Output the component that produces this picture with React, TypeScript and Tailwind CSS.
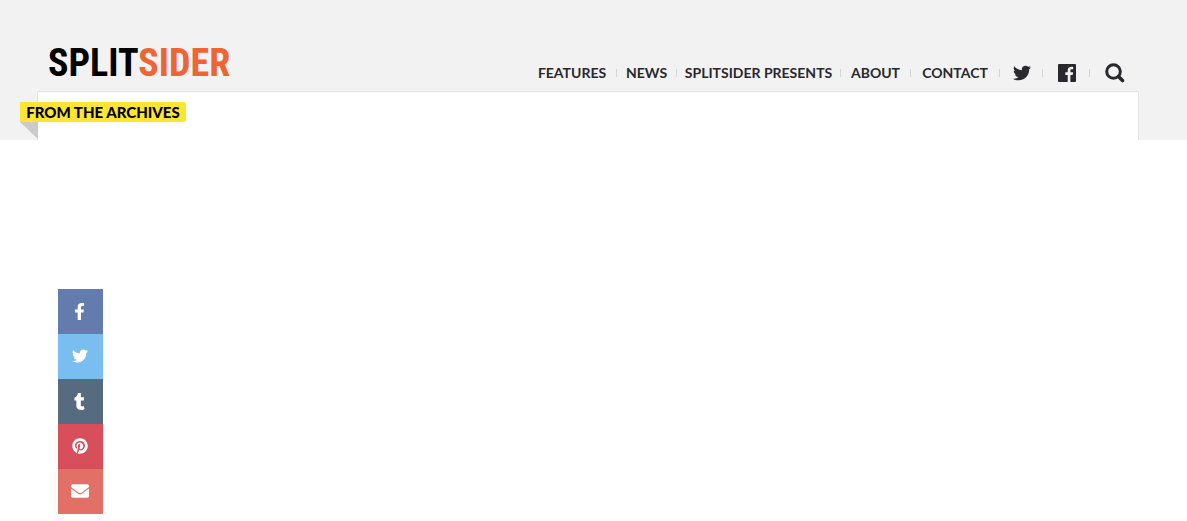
import { FaEnvelope, FaFacebookF, FaPinterest, FaTumblr, FaTwitter } from "react-icons/fa";

const links = [
  { label: "Features", width: "w-[89px]" },
  { label: "News", width: "w-[60px]" },
  { label: "Splitsider Presents", width: "w-[164px]" },
  { label: "About", width: "w-[70px]" },
  { label: "Contact", width: "w-[89px]" },
];

const shares = [
  { label: "Share on Facebook", color: "bg-[#637bad]", icon: <FaFacebookF size={17} /> },
  { label: "Share on Twitter", color: "bg-[#7abdf0]", icon: <FaTwitter size={16} /> },
  { label: "Share on Tumblr", color: "bg-[#566b80]", icon: <FaTumblr size={17} /> },
  { label: "Share on Pinterest", color: "bg-[#d64f5a]", icon: <FaPinterest size={16} /> },
  { label: "Share by email", color: "bg-[#e27066]", icon: <FaEnvelope size={18} /> },
];

const Divider = () => <span className="h-2 w-px shrink-0 bg-[#d4d4d4]" />;

const FacebookSquare = () => (
  <svg width="18" height="18" viewBox="0 0 18 18" fill="currentColor" aria-hidden="true">
    <path d="M1 0h16a1 1 0 0 1 1 1v16a1 1 0 0 1-1 1h-4.600v-7h2.300l.4-2.700h-2.700V6.600c0-.8.3-1.300 1.400-1.300h1.400V2.900c-.3 0-1.100-.1-2-.1-2.100 0-3.500 1.200-3.500 3.500v2H7.300V11h2.400v7H1a1 1 0 0 1-1-1V1a1 1 0 0 1 1-1z" />
  </svg>
);

const SearchIcon = () => (
  <svg width="20" height="20" viewBox="0 0 20 20" fill="none" stroke="currentColor" aria-hidden="true">
    <circle cx="8.500" cy="8.500" r="6.800" strokeWidth="3" />
    <path d="M13.500 13.500l4 4" strokeWidth="3.600" strokeLinecap="round" />
  </svg>
);

const Header = () => (
  <header className="bg-[#f2f2f2] pl-[37px] pr-12">
    <div className="flex h-[91px] items-end justify-between pl-[11px] pr-[14px]">
      <a
        href="#"
        className="mb-1 whitespace-nowrap font-['Roboto_Condensed','Liberation_Sans_Narrow','Liberation_Sans',sans-serif] text-[38px] font-bold leading-[48px] text-black"
      >
        SPLIT<span className="text-[#ee6435]">SIDER</span>
      </a>
      <nav className="mb-2 flex h-5 items-center font-['Lato',sans-serif] text-sm font-bold text-[#28282d]">
        {links.map((link) => (
          <div key={link.label} className={`flex shrink-0 items-center ${link.width}`}>
            <a href="#" className="flex-1 whitespace-nowrap text-center uppercase leading-5">
              {link.label}
            </a>
            <Divider />
          </div>
        ))}
        <a href="#" aria-label="Twitter" className="flex w-[42px] justify-center pl-0.5">
          <FaTwitter size={18} />
        </a>
        <Divider />
        <a href="#" aria-label="Facebook" className="flex w-[46px] justify-center pl-0.5">
          <FacebookSquare />
        </a>
        <Divider />
        <button type="button" aria-label="Search" className="ml-[15px]">
          <SearchIcon />
        </button>
      </nav>
    </div>
    <div className="relative h-[49px] rounded-t-xs border border-b-0 border-[#e2e2e2] bg-white">
      <div className="absolute -left-[18px] top-[10px]">
        <a
          href="#"
          className="block h-5 w-[166px] whitespace-nowrap rounded-r-xs bg-[#fee532] text-center font-['Lato',sans-serif] text-[15px] font-black leading-5 text-black"
        >
          FROM THE ARCHIVES
        </a>
        <svg width="18" height="17" viewBox="0 0 18 17" aria-hidden="true">
          <path d="M0 0h18v17z" fill="#cacaca" />
        </svg>
      </div>
    </div>
  </header>
);

const ShareBar = () => (
  <div className="ml-[58px] mt-[149px] flex w-[45px] flex-col">
    {shares.map((share) => (
      <a
        key={share.label}
        href="#"
        aria-label={share.label}
        className={`flex h-[45px] items-center justify-center pr-0.5 pb-px text-white ${share.color}`}
      >
        {share.icon}
      </a>
    ))}
  </div>
);

const App = () => {
  return (
    <div className="bg-white">
      <Header />
      <main>
        <ShareBar />
      </main>
    </div>
  );
};

export default App;
